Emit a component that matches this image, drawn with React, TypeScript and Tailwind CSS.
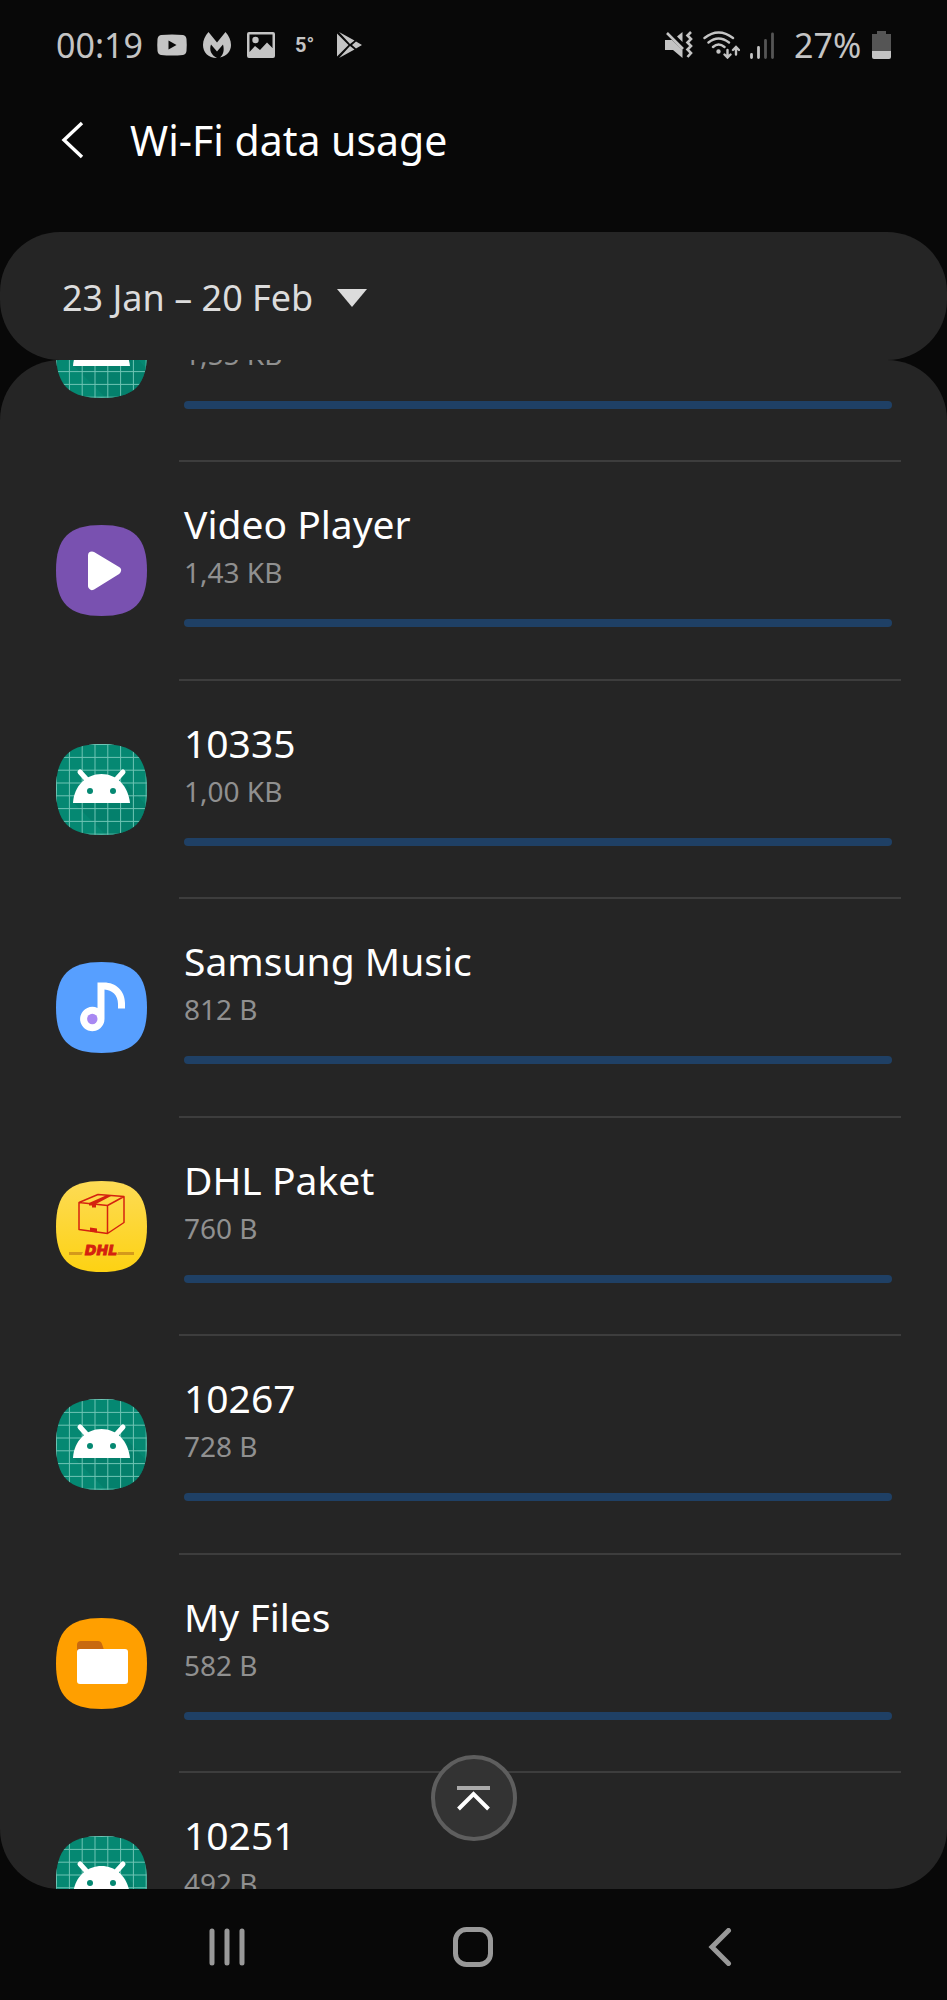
import type { ReactNode } from "react";

const SQUIRCLE =
  "M45.5 0C78 0 91 13 91 45.5S78 91 45.5 91 0 78 0 45.5 13 0 45.5 0Z";

function AppIcon({ id, fill, children }: { id: string; fill: string; children: ReactNode }) {
  return (
    <svg viewBox="0 0 91 91" className="h-[91px] w-[91px] shrink-0" aria-hidden="true">
      <defs>
        <clipPath id={id}>
          <path d={SQUIRCLE} />
        </clipPath>
        <linearGradient id={`${id}-gold`} x1="0" y1="0" x2="0" y2="1">
          <stop offset="0" stopColor="#fddb55" />
          <stop offset="1" stopColor="#fdd213" />
        </linearGradient>
      </defs>
      <g clipPath={`url(#${id})`}>
        <rect width="91" height="91" fill={fill} />
        {children}
      </g>
    </svg>
  );
}

function AndroidIcon({ id }: { id: string }) {
  const lines = [0.5, 13.4, 26.2, 39, 51.8, 64.6, 77.4, 90.2];
  return (
    <AppIcon id={id} fill="#058872">
      <path d="M18 59 50 91H91V62L70 40 74 59Z" fill="#047a67" opacity=".55" />
      <g stroke="#6fc4b4" strokeWidth="1">
        {lines.map((p) => (
          <path key={p} d={`M${p} 0V91M0 ${p}H91`} />
        ))}
      </g>
      <path d="M24 28 33 38M67 28 58 38" stroke="#fff" strokeWidth="5" strokeLinecap="round" />
      <path d="M17 59C18 42 30 30 45.500 30S72 42 74 59Z" fill="#fff" />
      <circle cx="34" cy="47" r="3" fill="#058872" />
      <circle cx="57" cy="47" r="3" fill="#058872" />
    </AppIcon>
  );
}

function VideoIcon() {
  return (
    <AppIcon id="video" fill="#7951b0">
      <path
        d="M36 30.500 61 45.500 36 61Z"
        fill="#fff"
        stroke="#fff"
        strokeWidth="8"
        strokeLinejoin="round"
      />
    </AppIcon>
  );
}

function MusicIcon() {
  return (
    <AppIcon id="music" fill="#579fff">
      <path d="M41.500 20.500H48C60 20.500 69 29 69 41V46.500H62V42C62 33 56 28 48.500 27.500V57A12.200 12.200 0 1 1 41.500 46Z" fill="#fff" />
      <circle cx="36.300" cy="57" r="5.200" fill="#a888f2" />
    </AppIcon>
  );
}

function DhlIcon() {
  return (
    <AppIcon id="dhl" fill="url(#dhl-gold)">
      <g fill="none" stroke="#d4220f" strokeWidth="1.500" strokeLinejoin="round">
        <path d="M23 21.500 51.500 24.500V52.500L23 48.500ZM51.500 24.500 68 15.500V41.500L51.500 52.500M23 21.500 42 13.500 68 15.500" />
      </g>
      <path d="M33 22 51 14 56 14.500 40 23V26.500H36V24.500H33ZM34 46.500 41 47.500V51.500L34 50.500Z" fill="#d4220f" />
      <path d="M13 71H27L25.500 74H13ZM62 71H78V74H61Z" fill="#d49a1b" />
      <text
        x="45"
        y="74"
        textAnchor="middle"
        fill="#d4220f"
        stroke="#d4220f"
        strokeWidth="1"
        className="font-['DejaVu_Sans',sans-serif] text-[14px] font-bold italic"
      >
        DHL
      </text>
    </AppIcon>
  );
}

function FilesIcon() {
  return (
    <AppIcon id="files" fill="#ff9f00">
      <path d="M21 40V27Q21 23 25 23H42Q45 23 46 26L48 32V40Z" fill="#c8690f" />
      <rect x="21" y="31" width="51" height="35" rx="3" fill="#fff" />
    </AppIcon>
  );
}

const apps = [
  { name: "", usage: "1,55 KB", icon: <AndroidIcon id="android-a" /> },
  { name: "Video Player", usage: "1,43 KB", icon: <VideoIcon /> },
  { name: "10335", usage: "1,00 KB", icon: <AndroidIcon id="android-b" /> },
  { name: "Samsung Music", usage: "812 B", icon: <MusicIcon /> },
  { name: "DHL Paket", usage: "760 B", icon: <DhlIcon /> },
  { name: "10267", usage: "728 B", icon: <AndroidIcon id="android-c" /> },
  { name: "My Files", usage: "582 B", icon: <FilesIcon /> },
  { name: "10251", usage: "492 B", icon: <AndroidIcon id="android-d" /> },
];

function StatusBar() {
  return (
    <div className="flex h-[90px] items-center justify-between pr-14 pl-14 text-[#c4c4c4]">
      <div className="flex items-center gap-4">
        <span className="w-[85px] text-[34px] leading-10">00:19</span>
        <svg viewBox="0 0 30 22" className="h-[22px] w-[30px]" fill="currentColor" aria-hidden="true">
          <path fillRule="evenodd" d="M4 1Q15 0 26 1 29 1.500 29.500 5 30 11 29.500 17 29 20.500 26 21 15 22 4 21 1 20.500.5 17 0 11 .5 5 1 1.500 4 1ZM11.500 6.500V15.500L19.500 11Z" />
        </svg>
        <svg viewBox="0 0 28 26" className="h-[26px] w-7" fill="currentColor" aria-hidden="true">
          <path d="M5.500 0 14 10.500 22.500 0C26 4 28 8 28 13 28 19 24 24 17 25.500 20.500 22.500 21.500 18 20 12.500L14 19.500 8 12.500C6 18 8 23 14 26 5 26 0 20 0 13 0 8 2 4 5.500 0Z" />
        </svg>
        <svg viewBox="0 0 28 26" className="h-[26px] w-7" fill="currentColor" aria-hidden="true">
          <path fillRule="evenodd" d="M2 0H26Q28 0 28 2V24Q28 26 26 26H2Q0 26 0 24V2Q0 0 2 0ZM2.500 2.500V20L8 14 13 18 20 10.500 25.500 16V2.500Z" />
          <circle cx="8.500" cy="8" r="3.200" />
        </svg>
        <span className="w-[30px] pl-1 font-['Roboto',sans-serif] text-[20px] leading-6 font-bold">5°</span>
        <svg viewBox="0 0 25 26" className="h-[26px] w-[25px]" fill="currentColor" aria-hidden="true">
          <path d="M0 1.500 11.500 13 0 24.500ZM2 0 17.500 8.500 13 12ZM2 26 17.500 17.500 13 14ZM19 9.500 25 13 19 16.500 15 13Z" />
        </svg>
      </div>
      <div className="flex items-center">
        <svg viewBox="0 0 28 28" className="mr-2.5 h-7 w-7" fill="currentColor" aria-hidden="true">
          <path d="M0 9H7L17.500 19V27L8 19H0ZM12 5.500 17.500 1V11Z" />
          <path d="M2 2 18 18M26 1 22.500 4.500 26 8 22.500 11.500 26 15 22.500 18.500 26 22 22.500 26" fill="none" stroke="currentColor" strokeWidth="2.600" />
        </svg>
        <svg viewBox="0 0 37 28" className="mr-2.5 h-7 w-[37px]" fill="none" stroke="currentColor" strokeWidth="2.400" strokeLinecap="round" aria-hidden="true">
          <path d="M1.500 7Q15.500-4 30 7M5.500 11.500Q15.500 3.500 26 11.500M10 16Q15.500 11 21.500 16M24.500 19V26M21.500 23.500 24.500 26.500 27.500 23.500M33 23.500V16.500M30 19 33 16 36 19" />
          <circle cx="15.500" cy="20.500" r="1" fill="currentColor" />
        </svg>
        <svg viewBox="0 0 24 27" className="mr-5 h-[27px] w-6" strokeWidth="2.800" strokeLinecap="round" stroke="currentColor" aria-hidden="true">
          <path d="M1.500 22.500V25.500M8.500 15.500V25.500" />
          <path d="M15.500 8.500V25.500M22.500 2V25.500" stroke="#555" />
        </svg>
        <span className="w-[78px] text-[34px] leading-10">27%</span>
        <svg viewBox="0 0 19 28" className="h-7 w-[19px]" aria-hidden="true">
          <path d="M5 3V0H14V3H19V22H0V3Z" fill="#555" />
          <path d="M0 20H19V26Q19 28 17 28H2Q0 28 0 26Z" fill="currentColor" />
        </svg>
      </div>
    </div>
  );
}

export default function App() {
  return (
    <div className="flex h-screen flex-col overflow-hidden bg-[#080808] font-['Noto_Sans',sans-serif] text-white">
      <StatusBar />
      <header className="flex h-[142px] items-start px-14 pt-[22px]">
        <button type="button" aria-label="Back" className="flex h-14 w-[74px] items-center pl-1">
          <svg viewBox="0 0 24 38" className="h-[38px] w-6" fill="none" stroke="#fff" strokeWidth="3.400" aria-hidden="true">
            <path d="M22 2 4 19 22 36" />
          </svg>
        </button>
        <h1 className="text-[41px] leading-[56px]">Wi-Fi data usage</h1>
      </header>

      <button
        type="button"
        aria-haspopup="listbox"
        className="flex h-32 shrink-0 items-center gap-6 rounded-[60px] bg-[#252525] px-[62px] pt-1 text-[36px] text-[#dcdcdc]"
      >
        23 Jan – 20 Feb
        <svg viewBox="0 0 30 18" className="h-[18px] w-[30px]" fill="currentColor" aria-hidden="true">
          <path d="M0 0H30L15 18Z" />
        </svg>
      </button>

      <main className="relative min-h-0 flex-1 overflow-hidden rounded-[60px] bg-[#252525]">
        <ul className="-mt-[116px]">
          {apps.map((app, i) => (
            <li key={i} className="flex h-[218px] gap-8 pr-[46px] pl-14 even:h-[219px]">
              <div className="pt-[63px]">{app.icon}</div>
              <div className="flex flex-1 flex-col border-b-2 border-[#3d3d3d] pt-[35px] pr-[9px] pl-[5px]">
                <h2 className="h-[54px] text-[39px] leading-[54px]">{app.name}</h2>
                <p className="text-[28px] leading-[42px] text-[#909090]">{app.usage}</p>
                <div className="mt-[26px] h-2 rounded-full bg-[#1f4065]" />
              </div>
            </li>
          ))}
        </ul>
        <button
          type="button"
          aria-label="Go to top"
          className="absolute bottom-12 left-1/2 flex h-[86px] w-[86px] -translate-x-1/2 items-center justify-center rounded-full border-4 border-[#5e5e5e] bg-[#333]"
        >
          <svg viewBox="0 0 33 25" className="h-[25px] w-[33px]" fill="none" strokeWidth="4" aria-hidden="true">
            <path d="M0 2H33" stroke="#aaa" />
            <path d="M1.500 23 16.500 8 31.500 23" stroke="#fff" />
          </svg>
        </button>
      </main>

      <nav className="grid h-[111px] shrink-0 grid-cols-3 px-[104px] pt-1 text-[#999]">
        <button type="button" aria-label="Recent apps" className="flex items-center justify-center">
          <svg viewBox="0 0 36 38" className="h-[38px] w-9" stroke="currentColor" strokeWidth="5" strokeLinecap="round" aria-hidden="true">
            <path d="M3 3V35M18 3V35M33 3V35" />
          </svg>
        </button>
        <button type="button" aria-label="Home" className="flex items-center justify-center">
          <svg viewBox="0 0 40 40" className="h-10 w-10" fill="none" stroke="currentColor" strokeWidth="5" aria-hidden="true">
            <rect x="2.500" y="2.500" width="35" height="35" rx="11" />
          </svg>
        </button>
        <button type="button" aria-label="Back" className="flex items-center justify-center">
          <svg viewBox="0 0 24 38" className="h-[38px] w-6" fill="none" stroke="currentColor" strokeWidth="5" strokeLinecap="round" aria-hidden="true">
            <path d="M20.500 2.500 4 19 20.500 35.500" />
          </svg>
        </button>
      </nav>
    </div>
  );
}
